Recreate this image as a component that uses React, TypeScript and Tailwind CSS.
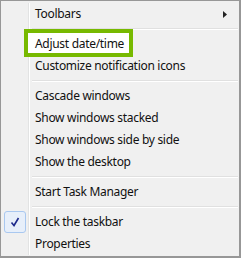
import React from "react";

const font = { fontFamily: '"Noto Sans", "Open Sans", sans-serif' };

function Item({ label, arrow, checked }: { label: string; arrow?: boolean; checked?: boolean }) {
  return (
    <div className="flex h-[22px]">
      <div className="w-[27px] flex items-center justify-end">
        {checked ? (
          <div className="w-[22px] h-[22px] mr-[2px] rounded-[3px] border border-[#a9c8f0] bg-[#e7effa] flex items-center justify-center">
            <svg width="10" height="10" viewBox="0 0 10 10">
              <path d="M1.5 5.5 L4 8.5 L8.5 1" fill="none" stroke="#1e2a8c" strokeWidth="1.6" />
            </svg>
          </div>
        ) : null}
      </div>
      <div className="w-px bg-[#e2e3e3]" />
      <div className="w-px bg-white" />
      <div className="flex-1 flex items-center pl-[5px] pr-[10px] relative z-10">
        <span className="text-[12px] text-[#111] leading-none tracking-[-0.3px]">{label}</span>
        {arrow ? (
          <svg className="ml-auto mr-[2px]" width="4" height="7" viewBox="0 0 4 7">
            <path d="M0 0 L4 3.5 L0 7 Z" fill="#222" />
          </svg>
        ) : null}
      </div>
    </div>
  );
}

function Sep() {
  return (
    <div className="flex h-[8px]">
      <div className="w-[27px]" />
      <div className="w-px bg-[#e2e3e3]" />
      <div className="w-px bg-white" />
      <div className="flex-1 flex flex-col justify-center pl-[2px] pr-[1px]">
        <div className="h-px bg-[#e0e0e0]" />
        <div className="h-px bg-white" />
      </div>
    </div>
  );
}

export default function App() {
  return (
    <div className="w-[241px] h-[258px] bg-[#f0f0f0] relative" style={font}>
      <div className="w-[241px] h-[258px] border-l border-t border-[#979797] border-r-2 border-b-2 pt-[2px] relative">
        <Item label="Toolbars" arrow />
        <Sep />
        <Item label="Adjust date/time" />
        <Item label="Customize notification icons" />
        <Sep />
        <Item label="Cascade windows" />
        <Item label="Show windows stacked" />
        <Item label="Show windows side by side" />
        <Item label="Show the desktop" />
        <Sep />
        <Item label="Start Task Manager" />
        <Sep />
        <Item label="Lock the taskbar" checked />
        <Item label="Properties" />
      </div>
      <div className="absolute left-[24px] top-[29px] w-[109px] h-[28px] border-4 border-[#77b900] bg-white" />
    </div>
  );
}
